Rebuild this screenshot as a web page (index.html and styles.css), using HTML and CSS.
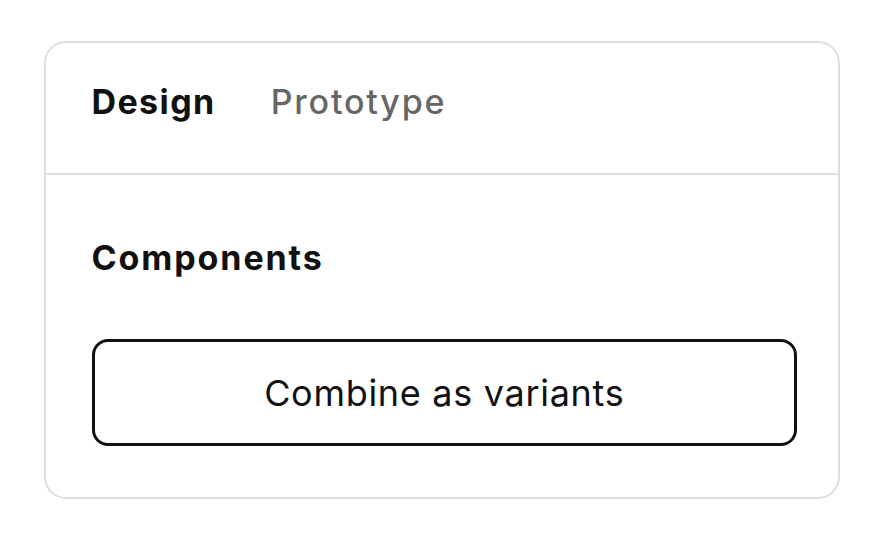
FILE: index.html
```html
<!DOCTYPE html>
<html>
<head>
<meta charset="utf-8">
<link rel="stylesheet" href="styles.css">
</head>
<body>
<div class="panel">
  <div class="tabs">
    <span class="tab tab-active">Design</span>
    <span class="tab">Prototype</span>
  </div>
  <div class="section">
    <div class="section-title">Components</div>
    <button class="btn">Combine as variants</button>
  </div>
</div>
</body>
</html>
```
FILE: styles.css
```css
html, body {
  margin: 0;
  padding: 0;
  background: #ffffff;
}
body {
  font-family: Inter, "Noto Sans", sans-serif;
  padding: 41px 0 0 44px;
}
.panel {
  width: 796px;
  height: 458px;
  box-sizing: border-box;
  border: 2.5px solid #dedede;
  border-radius: 22px;
  background: #fff;
}
.tabs {
  display: flex;
  gap: 55px;
  height: 132px;
  box-sizing: border-box;
  padding: 39px 0 0 45.5px;
  align-items: flex-start;
  border-bottom: 2.5px solid #dedede;
}
.tab {
  font-size: 34px;
  line-height: 40px;
  font-weight: 500;
  color: #666;
  letter-spacing: 1.8px;
}
.tab-active {
  font-weight: 700;
  color: #111;
  letter-spacing: 1.4px;
}
.section {
  padding: 63px 41px 0 45.5px;
  display: flex;
  flex-direction: column;
}
.section-title {
  font-size: 34px;
  font-weight: 700;
  color: #111;
  letter-spacing: 1.9px;
  line-height: 40px;
}
.btn {
  margin-top: 61px;
  height: 107px;
  width: 100%;
  box-sizing: border-box;
  border: 3px solid #111;
  border-radius: 16px;
  background: #fff;
  font-family: Inter, "Noto Sans", sans-serif;
  font-size: 36px;
  font-weight: 400;
  color: #111;
  letter-spacing: 0.7px;
  padding: 0;
}
```
